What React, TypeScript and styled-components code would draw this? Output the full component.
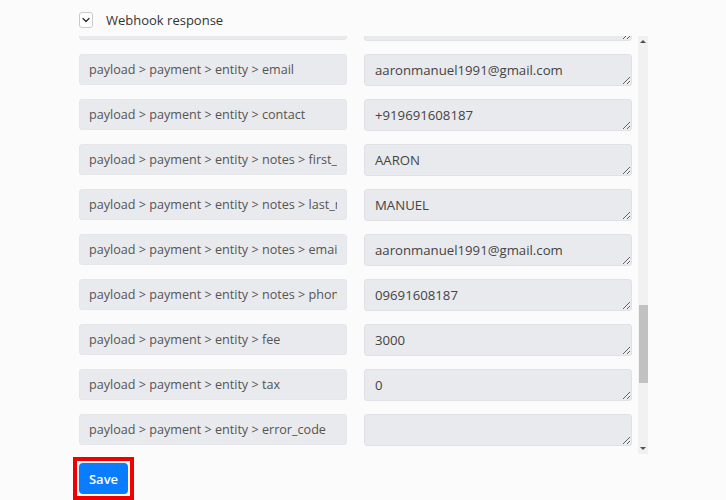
import React from "react";
import styled, { createGlobalStyle } from "styled-components";

const Global = createGlobalStyle`
  html, body { margin: 0; padding: 0; background: #fbfbfb; }
  body { font-family: "Open Sans", "Liberation Sans", sans-serif; color: #444; }
`;

const Page = styled.div`
  width: 726px;
  height: 500px;
  overflow: hidden;
  display: flex;
  flex-direction: column;
`;

const Header = styled.div`
  display: flex;
  align-items: center;
  gap: 13px;
  padding: 12px 0 0 79px;
  height: 16px;
`;

const Toggle = styled.span`
  width: 12px;
  height: 14px;
  border: 1px solid #c9c9c9;
  border-radius: 3px;
  background: #fff;
  display: flex;
  align-items: center;
  justify-content: center;
  box-sizing: content-box;
`;

const Title = styled.span`
  font-size: 13px;
  color: #333;
`;

const Panel = styled.div`
  display: flex;
  margin: 8px 0 0 79px;
  width: 569px;
  height: 419px;
`;

const Viewport = styled.div`
  flex: 1;
  overflow: hidden;
  padding-right: 5px;
`;

const List = styled.div`
  display: flex;
  flex-direction: column;
  gap: 13px;
  margin-top: -27px;
`;

const Row = styled.div`
  display: grid;
  grid-template-columns: 268px 268px;
  column-gap: 17px;
`;

const KeyField = styled.input`
  box-sizing: border-box;
  height: 31px;
  width: 268px;
  border: 1px solid #e4e6ea;
  border-radius: 3px;
  background: #e9eaed;
  padding: 0 9px;
  font-family: "Open Sans", "Liberation Sans", sans-serif;
  font-size: 12.6px;
  color: #555;
  outline: none;
`;

const ValueField = styled.textarea`
  box-sizing: border-box;
  height: 32px;
  width: 268px;
  border: 1px solid #dfe1e5;
  border-radius: 3px;
  background: #e9eaed;
  padding: 6px 10px;
  font-family: "Open Sans", "Liberation Sans", sans-serif;
  font-size: 13.2px;
  line-height: 18px;
  color: #444;
  outline: none;
  overflow: hidden;
  resize: vertical;
`;

const Track = styled.div`
  width: 10px;
  background: #f1f1f1;
  display: flex;
  flex-direction: column;
  align-items: center;
`;

const Arrow = styled.div<{ $down?: boolean }>`
  height: 11px;
  width: 10px;
  display: flex;
  align-items: center;
  justify-content: center;
  &::after {
    content: "";
    border-left: 3px solid transparent;
    border-right: 3px solid transparent;
    ${(p) => (p.$down ? "border-top: 3px solid #505050;" : "border-bottom: 3px solid #505050;")}
  }
`;

const Gutter = styled.div`
  flex: 1;
  width: 100%;
  display: flex;
  flex-direction: column;
  align-items: center;
  padding-top: 258px;
`;

const Thumb = styled.div`
  width: 9px;
  height: 78px;
  background: #c1c1c1;
`;

const Footer = styled.div`
  padding: 3px 0 0 73px;
`;

const Highlight = styled.div`
  display: inline-flex;
  border: 4px solid #f00000;
  padding: 2px;
`;

const SaveButton = styled.button`
  width: 49px;
  height: 31px;
  border: none;
  border-radius: 4px;
  background: #0a7cff;
  color: #fff;
  font-family: "Open Sans", "Liberation Sans", sans-serif;
  font-size: 13px;
  font-weight: 600;
  padding: 0;
`;

const rows: [string, string][] = [
  ["payload > payment > entity > method", ""],
  ["payload > payment > entity > email", "aaronmanuel1991@gmail.com"],
  ["payload > payment > entity > contact", "+919691608187"],
  ["payload > payment > entity > notes > first_name", "AARON"],
  ["payload > payment > entity > notes > last_name", "MANUEL"],
  ["payload > payment > entity > notes > email", "aaronmanuel1991@gmail.com"],
  ["payload > payment > entity > notes > phone", "09691608187"],
  ["payload > payment > entity > fee", "3000"],
  ["payload > payment > entity > tax", "0"],
  ["payload > payment > entity > error_code", ""],
];

export default function App() {
  return (
    <Page>
      <Global />
      <Header>
        <Toggle>
          <svg width="8" height="6" viewBox="0 0 8 6" fill="none">
            <path d="M1 1.5 L4 4.5 L7 1.5" stroke="#333" strokeWidth="1.4" strokeLinecap="round" strokeLinejoin="round" />
          </svg>
        </Toggle>
        <Title>Webhook response</Title>
      </Header>
      <Panel>
        <Viewport>
          <List>
            {rows.map(([k, v], i) => (
              <Row key={i}>
                <KeyField readOnly value={k} />
                <ValueField readOnly value={v} />
              </Row>
            ))}
          </List>
        </Viewport>
        <Track>
          <Arrow />
          <Gutter>
            <Thumb />
          </Gutter>
          <Arrow $down />
        </Track>
      </Panel>
      <Footer>
        <Highlight>
          <SaveButton>Save</SaveButton>
        </Highlight>
      </Footer>
    </Page>
  );
}
